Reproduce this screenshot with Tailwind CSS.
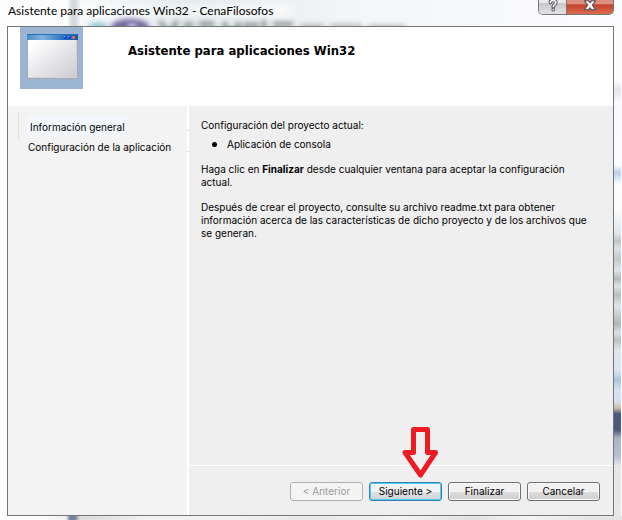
<!DOCTYPE html>
<html lang="es">
<head>
<meta charset="utf-8">
<meta name="viewport" content="width=device-width, initial-scale=1">
<title>Asistente para aplicaciones Win32 - CenaFilosofos</title>
<script src="https://cdn.jsdelivr.net/npm/@tailwindcss/browser@4"></script>
</head>
<body class="relative flex min-h-screen flex-col overflow-hidden bg-[#fcfcfd] font-[Inter,'DejaVu_Sans',sans-serif] text-[10px] leading-[13px] text-black">

  <!-- Glass frame: blurred desktop behind the window -->
  <div class="absolute inset-0 bg-linear-to-r from-[#fdfdfd] via-[#f4f6f7] via-60% to-[#fcfcfe]" aria-hidden="true"></div>
  <svg class="absolute top-0 left-0 h-[26px] w-[440px]" viewBox="0 0 440 26" aria-hidden="true">
    <defs>
      <filter id="soft" x="-20%" y="-50%" width="140%" height="200%"><feGaussianBlur stdDeviation="2.500"/></filter>
      <filter id="softer" x="-50%" y="-50%" width="200%" height="200%"><feGaussianBlur stdDeviation="5"/></filter>
      <linearGradient id="haze" x1="0" x2="1" y1="0" y2="0">
        <stop offset="0" stop-color="#dfe7ea" stop-opacity="0"/><stop offset=".4" stop-color="#dfe7ea"/><stop offset="1" stop-color="#dfe7ea" stop-opacity="0"/>
      </linearGradient>
    </defs>
    <rect x="70" width="290" height="26" fill="url(#haze)"/>
    <rect x="40" y="5" width="250" height="11" fill="#ffffff" opacity=".75" filter="url(#softer)"/>
    <path d="M74-10v46" stroke="#8d9aa8" stroke-width="4" opacity=".45" filter="url(#softer)"/>
    <rect x="70" y="-6" width="8" height="40" fill="#8d9aa8" opacity=".4" filter="url(#soft)"/>
    <ellipse cx="98" cy="26" rx="10" ry="4" fill="#58b4c4" opacity=".6" filter="url(#soft)"/>
    <ellipse cx="130" cy="27" rx="19" ry="8" fill="#5f5193" opacity=".85" filter="url(#soft)"/>
    <ellipse cx="132" cy="27" rx="5" ry="3" fill="#e4e0ee" filter="url(#soft)"/>
    <g fill="none" stroke="#555b61" stroke-width="4" opacity=".7" filter="url(#soft)">
      <path d="M160 21l6 9M177 21l-5 9M184 25h9M199 24h15M225 22v8h13V22M243 25h16M264 20v9M273 24h20"/>
      <path d="M300 26h24M330 26h32M368 27h38" opacity=".6"/>
    </g>
  </svg>
  <div class="absolute top-0 right-px bottom-0 w-[7px] bg-[linear-gradient(to_bottom,#fcfcfe_80px,#e4e6ed_90px,#f8f9fd_102px,#fbfcff_165px,#b9d0ea_173px,#fcfdfe_184px,#fafbfc_210px,#e6eef2_225px,#dfe4e8_234px,#bfc3c8_241px,#dce3e8_248px,#c3c8cc_259px,#dfe5ea_270px,#b5b9be_279px,#dde3e9_286px,#b9bec4_295px,#e0e5eb_306px,#b0b5ba_324px,#dde2e9_333px,#bbc0c5_340px,#dfe6ec_350px,#dbe5ef_370px,#a9c6df_380px,#d8e3f1_390px,#d5def0_402px,#c9bfa2_408px,#46577a_414px,#4b5a7c_430px,#aab4c6_438px,#b7bfce_456px,#e7e7e8_466px,#e8e8e8_520px)]" aria-hidden="true"></div>
  <div class="absolute right-0 bottom-0 left-0 h-1 bg-[linear-gradient(to_right,#fdfdfd_40px,#f1f1f2_66px,#76819a_70px,#76819a_75px,#dcdde0_80px,#e4e4e4_110px,#f2f2f2_150px,#f1f1f1_240px,#e7e7e7_310px,#f3f3f3_400px,#e2e2e2_470px,#f3f3f3_530px,#e4e4e4_600px)]" aria-hidden="true"></div>

  <header class="relative flex h-[26px] shrink-0 items-start justify-between px-2">
    <h1 class="pt-[3px] font-[Lato,'Noto_Sans',sans-serif] text-[12px] leading-4">Asistente para aplicaciones Win32 - CenaFilosofos</h1>
    <div class="flex h-[15px] overflow-hidden rounded-b-[5px] border border-t-0 border-[#77787c] shadow-[0_0_1px_1px_rgba(255,255,255,.8)]">
      <button type="button" aria-label="Ayuda" class="flex w-7 items-start justify-center border-r border-[#8a6a6a] bg-linear-to-b from-[#e9e9ea] from-20% via-[#c7c8cb] via-25% to-[#e2e2e3]">
        <svg class="h-3 w-3" viewBox="0 0 12 12" fill="none" stroke-linecap="round" aria-hidden="true">
          <path d="M3.3 2.6C3.3 0 8.9-.3 8.9 2.6 8.9 4.6 6.2 4.5 6.2 6.8M6.2 9.6v.1" stroke="#54555f" stroke-width="3.6"/>
          <path d="M3.3 2.6C3.3 0 8.9-.3 8.9 2.6 8.9 4.6 6.2 4.5 6.2 6.8M6.2 9.6v.1" stroke="#fafafa" stroke-width="1.6"/>
        </svg>
      </button>
      <button type="button" aria-label="Cerrar" class="flex w-[46px] items-start justify-center bg-linear-to-b from-[#dd8f80] from-25% via-[#c4412a] via-35% to-[#dc6a50]">
        <svg class="h-3 w-3.5" viewBox="0 0 14 12" aria-hidden="true">
          <path d="M1.500.8h4L7 2.6 8.500.8h4L9.300 5l3.200 4.800H8.500L7 7.800 5.500 9.800h-4L4.700 5z" fill="#fafafa" stroke="#54505c" stroke-width="1.1" stroke-linejoin="round"/>
        </svg>
      </button>
    </div>
  </header>

  <main class="relative mr-2 mb-1 ml-[7px] flex grow flex-col border border-[#757575] bg-white">
    <div class="flex h-[79px] shrink-0 items-start bg-white pl-3">
      <svg class="h-[62px] w-[63px] shrink-0" viewBox="0 0 63 62" aria-hidden="true">
        <defs>
          <linearGradient id="pane" x1="0" y1="0" x2="1" y2="1"><stop offset=".1" stop-color="#fff"/><stop offset="1" stop-color="#cbcbd2"/></linearGradient>
          <linearGradient id="bar" x1="0" x2="1" y1="0" y2="0"><stop offset="0" stop-color="#4b8ac6"/><stop offset=".3" stop-color="#83b3df"/><stop offset=".75" stop-color="#1f6dbb"/><stop offset="1" stop-color="#155ca8"/></linearGradient>
        </defs>
        <rect width="63" height="62" fill="#9ab4d1"/>
        <rect x="7" y="8" width="51" height="44" fill="#a9abb3"/>
        <rect x="8" y="12" width="49" height="39" fill="#d3d3d9"/>
        <rect x="8" y="12" width="48" height="38" fill="url(#pane)"/>
        <rect x="7" y="7" width="51" height="6" fill="url(#bar)"/>
        <rect x="7" y="7" width="51" height="1" fill="#2b6fb4"/>
        <path d="M44 9h3v3h-3zM48 9h3v3h-3z" fill="#2147d8"/><path d="M44 9h1v1h-1zM48 9h1v1h-1z" fill="#8fb0f4"/>
        <path d="M52 9h3v3h-3z" fill="#d0574b"/><path d="M53 10h1v1h-1z" fill="#f3b5a8"/>
      </svg>
      <h2 class="pt-4 pl-[45px] font-['DejaVu_Sans_Condensed','DejaVu_Sans',sans-serif] text-[13px] leading-4 font-bold">Asistente para aplicaciones Win32</h2>
    </div>

    <div class="flex grow">
      <nav class="w-[181px] shrink-0 border-r-2 border-white bg-[#f3f3f3] pt-[6px] pl-[10px]" aria-label="Pasos del asistente">
        <ul class="flex flex-col">
          <li class="relative flex h-7 border-l border-[#e2e2e2] pt-1 pl-2 after:absolute after:top-[18px] after:-right-[3px] after:h-px after:w-[3px] after:bg-[#e0e0e0]"><a href="#general" class="h-5 bg-[#f3f7fd] px-[3px] pt-[5px]">Información general</a></li>
          <li class="relative pt-px pl-[10px] after:absolute after:top-[11px] after:-right-[3px] after:h-px after:w-[3px] after:bg-[#e0e0e0]"><a href="#configuracion">Configuración de la aplicación</a></li>
        </ul>
      </nav>
      <div class="flex grow flex-col bg-[#efefef]">
        <section id="general" class="grow pt-[13px] pr-5 pl-3">
          <p>Configuración del proyecto actual:</p>
          <ul class="pt-[6px]">
            <li class="flex items-center gap-[10px] pl-[11px]"><span class="size-[5px] rounded-full bg-black"></span>Aplicación de consola</li>
          </ul>
          <p class="pt-3">Haga clic en <b>Finalizar</b> desde cualquier ventana para aceptar la configuración actual.</p>
          <p class="pt-3">Después de crear el proyecto, consulte su archivo readme.txt para obtener información acerca de las características de dicho proyecto y de los archivos que se generan.</p>
        </section>
        <footer class="relative flex justify-end gap-[6px] border-t border-white pt-4 pr-[13px] pb-[14px]">
          <button type="button" disabled class="h-[19px] w-[73px] rounded-[3px] border border-[#adb2b5] bg-[#f4f4f4] text-[#9a9a9a]">&lt; Anterior</button>
          <div class="relative flex">
            <svg class="absolute bottom-[22px] left-[33px] h-[54px] w-9" viewBox="0 0 36 54" aria-hidden="true">
              <path d="M11.5 4.5h14v23h8L18.500 50 3 27.500h8.500z" fill="none" stroke="#ed1c24" stroke-width="5" stroke-linejoin="round"/>
            </svg>
            <button type="button" class="h-[19px] w-[73px] rounded-[3px] border border-[#3c7fb1] bg-linear-to-b from-[#f0f2f3] from-50% via-[#dfe3e5] via-50% to-[#cfd3d5] shadow-[inset_0_0_0_1px_#48d0f2]">Siguiente &gt;</button>
          </div>
          <button type="button" class="h-[19px] w-[73px] rounded-[3px] border border-[#707070] bg-linear-to-b from-[#f2f2f2] from-50% via-[#dddddd] via-50% to-[#cfcfcf] shadow-[inset_0_0_0_1px_#fafafa]">Finalizar</button>
          <button type="button" class="h-[19px] w-[73px] rounded-[3px] border border-[#707070] bg-linear-to-b from-[#f2f2f2] from-50% via-[#dddddd] via-50% to-[#cfcfcf] shadow-[inset_0_0_0_1px_#fafafa]">Cancelar</button>
        </footer>
      </div>
    </div>
  </main>
</body>
</html>
